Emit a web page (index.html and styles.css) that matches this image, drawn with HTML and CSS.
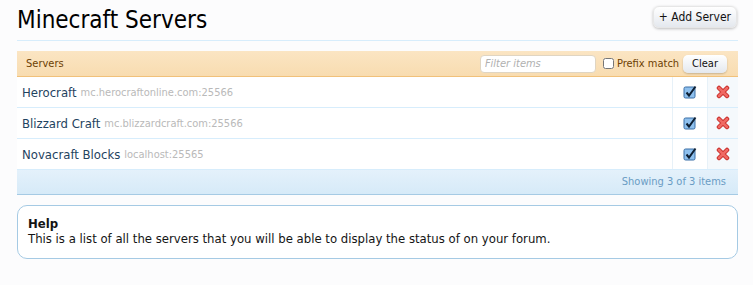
FILE: index.html
```html
<!DOCTYPE html>
<html lang="en">
  <head>
    <title>Minecraft Servers</title>
    <link rel="stylesheet" href="styles.css">
  </head>

  <body>
    <div class="page">
      <header class="titleBar">
        <h1>Minecraft Servers</h1>
        <button type="button" class="addButton">+ Add Server</button>
      </header>

      <section class="serverList">
        <div class="listHead">
          <h3>Servers</h3>
          <div class="filter">
            <input type="search" placeholder="Filter items">
            <label><input type="checkbox"> Prefix match</label>
            <button type="button">Clear</button>
          </div>
        </div>

        <ul class="rows">
          <li>
            <span class="name">Herocraft <em>mc.herocraftonline.com:25566</em></span>
            <span class="toggle">
              <svg viewBox="0 0 14 14" width="14" height="14">
                <rect x="1" y="2" width="11" height="11" rx="1.5" fill="#8ec0ee" stroke="#3a6ea5"/>
                <path d="M3.5 7.5 6 10.5 12.5 1.5" fill="none" stroke="#0d1f33" stroke-width="2"/>
              </svg>
            </span>
            <span class="delete">
              <svg viewBox="0 0 14 14" width="14" height="14">
                <path d="M3 3 11 11M11 3 3 11" stroke="#c9302c" stroke-width="4.5" stroke-linecap="round"/>
                <path d="M3 3 11 11M11 3 3 11" stroke="#f06a64" stroke-width="2.5" stroke-linecap="round"/>
              </svg>
            </span>
          </li>
          <li>
            <span class="name">Blizzard Craft <em>mc.blizzardcraft.com:25566</em></span>
            <span class="toggle">
              <svg viewBox="0 0 14 14" width="14" height="14">
                <rect x="1" y="2" width="11" height="11" rx="1.5" fill="#8ec0ee" stroke="#3a6ea5"/>
                <path d="M3.5 7.5 6 10.5 12.5 1.5" fill="none" stroke="#0d1f33" stroke-width="2"/>
              </svg>
            </span>
            <span class="delete">
              <svg viewBox="0 0 14 14" width="14" height="14">
                <path d="M3 3 11 11M11 3 3 11" stroke="#c9302c" stroke-width="4.5" stroke-linecap="round"/>
                <path d="M3 3 11 11M11 3 3 11" stroke="#f06a64" stroke-width="2.5" stroke-linecap="round"/>
              </svg>
            </span>
          </li>
          <li>
            <span class="name">Novacraft Blocks <em>localhost:25565</em></span>
            <span class="toggle">
              <svg viewBox="0 0 14 14" width="14" height="14">
                <rect x="1" y="2" width="11" height="11" rx="1.5" fill="#8ec0ee" stroke="#3a6ea5"/>
                <path d="M3.5 7.5 6 10.5 12.5 1.5" fill="none" stroke="#0d1f33" stroke-width="2"/>
              </svg>
            </span>
            <span class="delete">
              <svg viewBox="0 0 14 14" width="14" height="14">
                <path d="M3 3 11 11M11 3 3 11" stroke="#c9302c" stroke-width="4.5" stroke-linecap="round"/>
                <path d="M3 3 11 11M11 3 3 11" stroke="#f06a64" stroke-width="2.5" stroke-linecap="round"/>
              </svg>
            </span>
          </li>
        </ul>

        <p class="listFoot">Showing 3 of 3 items</p>
      </section>

      <div class="help">
        <h4>Help</h4>
        <p>This is a list of all the servers that you will be able to display the status of on your forum.</p>
      </div>
    </div>
  </body>
</html>
```

FILE: styles.css
```css
body {
  margin: 0;
  background-color: #fcfcfd;
  font-family: "DejaVu Sans Condensed", "DejaVu Sans", sans-serif;
  font-stretch: condensed;
  color: #141414;
}

.page {
  padding: 0 15px 0 17px;
}

.titleBar {
  display: flex;
  justify-content: space-between;
  align-items: flex-start;
  border-bottom: 1px solid #d7edfc;
  height: 40px;

  h1 {
    margin: 5px 0 0;
    font-size: 24px;
    font-weight: normal;
    line-height: 30px;
    color: #000;
  }
}

.addButton {
  margin: 6px 1px 0 0;
  height: 22px;
  padding: 0 5px;
  border: 1px solid #e6e6e6;
  border-radius: 6px;
  background: linear-gradient(#ffffff, #e4e8ee);
  box-shadow: 0 1px 3px rgba(0, 0, 0, 0.25);
  font: inherit;
  font-size: 12px;
  color: #111;
}

.serverList {
  margin-top: 10px;
}

.listHead {
  display: flex;
  justify-content: space-between;
  align-items: center;
  height: 25px;
  padding-left: 9px;
  background: linear-gradient(#fbe5c3, #f8dcb0);
  border-bottom: 1px solid #f1c17a;

  h3 {
    margin: 0;
    font-size: 11px;
    font-weight: normal;
    color: #6d3f03;
  }
}

.filter {
  display: flex;
  align-items: center;
  gap: 4px;
  padding-right: 11px;

  input[type="search"] {
    box-sizing: border-box;
    width: 116px;
    height: 18px;
    margin: 0 3px 0 0;
    padding: 0 4px;
    border: 1px solid #e0d5c2;
    border-radius: 4px;
    background-color: #fff;
    font: inherit;
    font-size: 11px;
  }

  input::placeholder {
    color: #b0b0b0;
    font-style: italic;
  }

  label {
    display: flex;
    align-items: center;
    gap: 3px;
    font-size: 11px;
    color: #6d3f03;
  }

  input[type="checkbox"] {
    margin: 0;
    width: 11px;
    height: 11px;
  }

  button {
    height: 18px;
    padding: 0 9px;
    border: 0;
    border-radius: 5px;
    background: linear-gradient(#ffffff, #e4e8ee);
    box-shadow: 0 1px 2px rgba(0, 0, 0, 0.2);
    font: inherit;
    font-size: 11px;
    color: #111;
  }
}

.rows {
  list-style-type: none;
  margin: 0;
  padding: 0;

  li {
    display: flex;
    align-items: stretch;
    height: 30px;
    border-bottom: 1px solid #d7edfc;
    background-color: #fff;
  }
}

.name {
  flex: 1;
  display: flex;
  align-items: center;
  gap: 4px;
  padding-left: 5px;
  font-size: 13px;
  color: #1f4360;

  em {
    font-style: normal;
    font-size: 11px;
    color: #b9b9b9;
  }
}

.toggle,
.delete {
  display: flex;
  align-items: center;
  justify-content: center;
  border-left: 1px solid #e7f1f8;
}

.toggle {
  width: 34px;
}

.delete {
  width: 30px;
  background-color: #f5f9fc;
}

.listFoot {
  margin: 0;
  height: 24px;
  line-height: 24px;
  padding-right: 12px;
  text-align: right;
  font-size: 11px;
  color: #6a9cc4;
  background: linear-gradient(#e4f1fb, #d6eaf8);
  border-bottom: 1px solid #a5cae4;
}

.help {
  margin-top: 10px;
  padding: 10px 10px 12px;
  border: 1px solid #a5cae4;
  border-radius: 10px;
  background-color: #fff;
  font-size: 13px;

  h4 {
    margin: 0;
    font-size: 13px;
  }

  p {
    margin: 0;
  }
}
```
